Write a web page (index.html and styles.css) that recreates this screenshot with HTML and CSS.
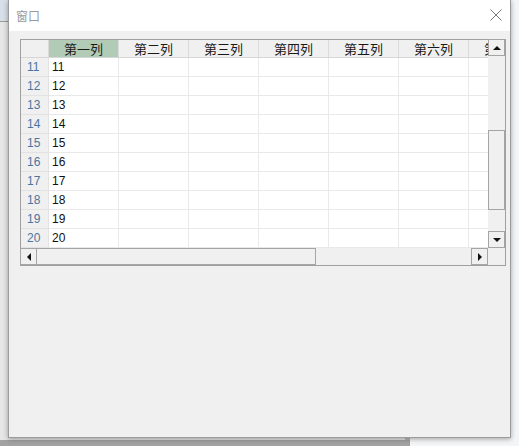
FILE: index.html
```html
<!DOCTYPE html>
<html lang="zh">
<head>
<meta charset="utf-8">
<title>窗口</title>
<link rel="stylesheet" href="styles.css">
</head>
<body>
<div class="desktop">
  <div class="window">
    <div class="titlebar">
      <span class="title">窗口</span>
      <svg class="close" width="12" height="12" viewBox="0 0 12 12"><path d="M0.5 0.5 L11.5 11.5 M11.5 0.5 L0.5 11.5" stroke="#7a7a7a" stroke-width="1" fill="none"/></svg>
    </div>
    <div class="content">
      <div class="gridbox">
        <div class="cells">
          <div class="row header">
            <div class="c rh"></div>
            <div class="c sel">第一列</div>
            <div class="c">第二列</div>
            <div class="c">第三列</div>
            <div class="c">第四列</div>
            <div class="c">第五列</div>
            <div class="c">第六列</div>
            <div class="c">第七列</div>
          </div>
          <div class="row"><div class="c rh">11</div><div class="c">11</div><div class="c"></div><div class="c"></div><div class="c"></div><div class="c"></div><div class="c"></div><div class="c"></div></div>
          <div class="row"><div class="c rh">12</div><div class="c">12</div><div class="c"></div><div class="c"></div><div class="c"></div><div class="c"></div><div class="c"></div><div class="c"></div></div>
          <div class="row"><div class="c rh">13</div><div class="c">13</div><div class="c"></div><div class="c"></div><div class="c"></div><div class="c"></div><div class="c"></div><div class="c"></div></div>
          <div class="row"><div class="c rh">14</div><div class="c">14</div><div class="c"></div><div class="c"></div><div class="c"></div><div class="c"></div><div class="c"></div><div class="c"></div></div>
          <div class="row"><div class="c rh">15</div><div class="c">15</div><div class="c"></div><div class="c"></div><div class="c"></div><div class="c"></div><div class="c"></div><div class="c"></div></div>
          <div class="row"><div class="c rh">16</div><div class="c">16</div><div class="c"></div><div class="c"></div><div class="c"></div><div class="c"></div><div class="c"></div><div class="c"></div></div>
          <div class="row"><div class="c rh">17</div><div class="c">17</div><div class="c"></div><div class="c"></div><div class="c"></div><div class="c"></div><div class="c"></div><div class="c"></div></div>
          <div class="row"><div class="c rh">18</div><div class="c">18</div><div class="c"></div><div class="c"></div><div class="c"></div><div class="c"></div><div class="c"></div><div class="c"></div></div>
          <div class="row"><div class="c rh">19</div><div class="c">19</div><div class="c"></div><div class="c"></div><div class="c"></div><div class="c"></div><div class="c"></div><div class="c"></div></div>
          <div class="row"><div class="c rh">20</div><div class="c">20</div><div class="c"></div><div class="c"></div><div class="c"></div><div class="c"></div><div class="c"></div><div class="c"></div></div>
        </div>
        <div class="vscroll">
          <div class="sbtn"><span class="arr up"></span></div>
          <div class="vtrack"><div class="vthumb"></div></div>
          <div class="sbtn"><span class="arr down"></span></div>
        </div>
        <div class="hscroll">
          <div class="sbtn"><span class="arr left"></span></div>
          <div class="htrack"><div class="hthumb"></div></div>
          <div class="sbtn"><span class="arr right"></span></div>
        </div>
        <div class="corner"></div>
      </div>
    </div>
  </div>
</div>
</body>
</html>
```

FILE: styles.css
```css
html, body {
  margin: 0;
  padding: 0;
}
body {
  width: 519px;
  height: 446px;
  overflow: hidden;
  background:
    linear-gradient(#d7dfe8 0, #d7dfe8 21px, #9a9a9a 21px, #9a9a9a 22px, transparent 22px) 0 0 / 8px 446px no-repeat,
    linear-gradient(transparent 0, transparent 440px, #a2a2a2 440px) 0 0 / 410px 446px no-repeat,
    linear-gradient(90deg, #e6e6e6 0, #e6e6e6 405px, #b8b8b8 405px, #b8b8b8 410px, #f4f5f7 410px);
  font-family: "Noto Sans CJK SC", "Liberation Sans", sans-serif;
}
.desktop {
  display: flex;
  padding-left: 8px;
}
.window {
  width: 503px;
  height: 438px;
  box-sizing: border-box;
  border: 1px solid #9c9c9c;
  border-top: none;
  background: #f0f0f0;
  box-shadow: 0 1px 5px rgba(0, 0, 0, 0.35);
  display: flex;
  flex-direction: column;
}
.titlebar {
  height: 31px;
  background: #ffffff;
  display: flex;
  align-items: center;
  justify-content: space-between;
  padding: 0 8px 0 7px;
}
.title {
  font-size: 12px;
  color: #9a9a9a;
  letter-spacing: 0;
}
.close {
  display: block;
  margin-top: -1px;
}
.content {
  padding: 8px 0 0 11px;
}
.gridbox {
  width: 486px;
  height: 227px;
  box-sizing: border-box;
  border: 1px solid #a0a0a0;
  background: #f0f0f0;
  display: grid;
  grid-template-columns: 467px 17px;
  grid-template-rows: 208px 17px;
}
.cells {
  overflow: hidden;
  background: #ffffff;
}
.row {
  display: grid;
  grid-template-columns: 28px repeat(7, 70px);
  height: 19px;
}
.c {
  box-sizing: border-box;
  border-right: 1px solid #e9e9e9;
  border-bottom: 1px solid #e9e9e9;
  font-family: "Liberation Sans", "Noto Sans CJK SC", sans-serif;
  font-size: 12px;
  line-height: 18px;
  color: #111111;
  padding-left: 3px;
  white-space: nowrap;
  overflow: hidden;
}
.row .rh {
  background: #f0f0f0;
  color: #4a76a0;
  padding-left: 6px;
  border-right: 1px solid #e2e2e2;
  border-bottom: 1px solid #e2e2e2;
}
.header {
  height: 18px;
}
.header .c {
  background: #f0f0f0;
  font-family: "Noto Sans CJK SC", sans-serif;
  font-size: 13px;
  line-height: 17px;
  color: #1a1a1a;
  text-align: center;
  padding-left: 0;
  border-right: 1px solid #dadada;
  border-bottom: 1px solid #d6d6d6;
  overflow: visible;
}
.header .c.sel {
  background: #b1cbb7;
}
.vscroll {
  display: flex;
  flex-direction: column;
  margin-top: -1px;
}
.vtrack {
  flex: 1;
  padding-top: 74px;
}
.vthumb {
  height: 80px;
  box-sizing: border-box;
  border: 1px solid #a5a5a5;
  background: #f0f0f0;
  width: 17px;
}
.hscroll {
  display: flex;
  margin-left: -1px;
}
.htrack {
  flex: 1;
}
.hthumb {
  width: 279px;
  height: 17px;
  box-sizing: border-box;
  border: 1px solid #a5a5a5;
  border-left: none;
  background: #f0f0f0;
}
.sbtn {
  width: 17px;
  height: 17px;
  flex: none;
  box-sizing: border-box;
  border: 1px solid #a5a5a5;
  background: #f0f0f0;
  display: flex;
  align-items: center;
  justify-content: center;
}
.arr {
  width: 0;
  height: 0;
  display: block;
}
.arr.up {
  border-left: 4px solid transparent;
  border-right: 4px solid transparent;
  border-bottom: 4px solid #111;
}
.arr.down {
  border-left: 4px solid transparent;
  border-right: 4px solid transparent;
  border-top: 4px solid #111;
}
.arr.left {
  border-top: 4px solid transparent;
  border-bottom: 4px solid transparent;
  border-right: 4px solid #111;
}
.arr.right {
  border-top: 4px solid transparent;
  border-bottom: 4px solid transparent;
  border-left: 4px solid #111;
}
.corner {
  background: #f0f0f0;
}
```
